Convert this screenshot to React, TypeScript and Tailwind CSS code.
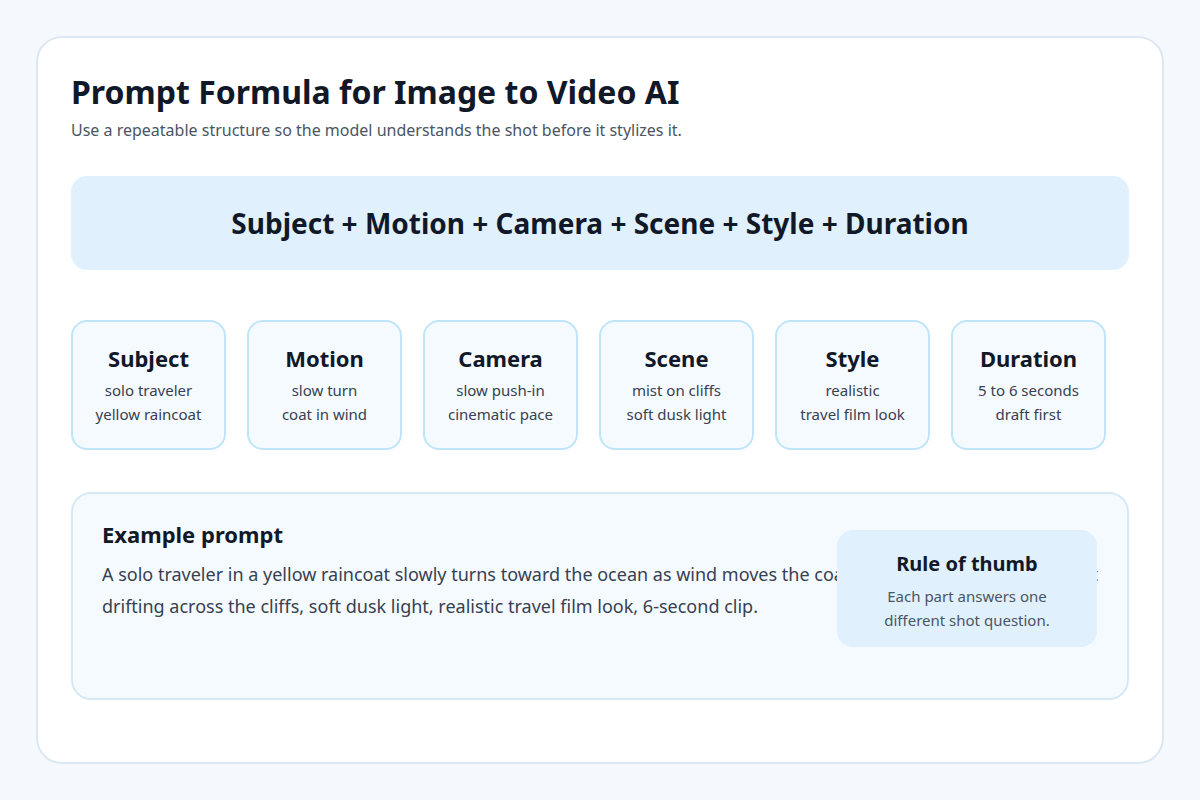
const parts = [
  { title: "Subject", lines: ["solo traveler", "yellow raincoat"] },
  { title: "Motion", lines: ["slow turn", "coat in wind"] },
  { title: "Camera", lines: ["slow push-in", "cinematic pace"] },
  { title: "Scene", lines: ["mist on cliffs", "soft dusk light"] },
  { title: "Style", lines: ["realistic", "travel film look"] },
  { title: "Duration", lines: ["5 to 6 seconds", "draft first"] },
];

export default function App() {
  return (
    <div className="min-h-[800px] bg-[#f5f9fd] p-[36px] font-[family-name:'Liberation_Sans',Arial,sans-serif] text-[#111827]">
      <div className="h-[728px] rounded-[26px] border-2 border-[#dbe8f4] bg-white px-[33px] pt-[36px]">
        <h1 className="text-[32px] font-bold leading-[36px]">Prompt Formula for Image to Video AI</h1>
        <p className="mt-[10px] text-[16px] leading-[20px] text-[#4b5563]">
          Use a repeatable structure so the model understands the shot before it stylizes it.
        </p>

        <div className="mt-[36px] flex h-[94px] items-center justify-center rounded-[16px] bg-[#e0f0fd]">
          <span className="text-[28px] font-bold">Subject + Motion + Camera + Scene + Style + Duration</span>
        </div>

        <div className="mt-[50px] flex gap-[21px]">
          {parts.map((p) => (
            <div
              key={p.title}
              className="flex h-[130px] w-[155px] flex-col items-center rounded-[16px] border-2 border-[#bfe5fb] bg-[#f5faff] pt-[22px]"
            >
              <div className="text-[22px] font-bold leading-[28px]">{p.title}</div>
              <div className="mt-[6px] text-center text-[15px] leading-[24px] text-[#374151]">
                {p.lines.map((l) => (
                  <div key={l}>{l}</div>
                ))}
              </div>
            </div>
          ))}
        </div>

        <div className="relative mt-[42px] h-[208px] rounded-[20px] border-2 border-[#d9e8f5] bg-[#f5faff] px-[29px] pt-[26px]">
          <div className="text-[22px] font-bold leading-[28px]">Example prompt</div>
          <p className="mt-[10px] w-[1000px] text-[18px] leading-[32px] text-[#374151]">
            A solo traveler in a yellow raincoat slowly turns toward the ocean as wind moves the coat, slow cinematic push-in, mist drifting across the cliffs, soft dusk light, realistic travel film look, 6-second clip.
          </p>
          <div className="absolute right-[30px] top-[36px] flex h-[117px] w-[260px] flex-col items-center rounded-[16px] bg-[#e0f0fd] pt-[22px]">
            <div className="text-[20px] font-bold leading-[24px]">Rule of thumb</div>
            <div className="mt-[8px] text-center text-[15px] leading-[24px] text-[#4b5563]">
              Each part answers one
              <br />
              different shot question.
            </div>
          </div>
        </div>
      </div>
    </div>
  );
}
